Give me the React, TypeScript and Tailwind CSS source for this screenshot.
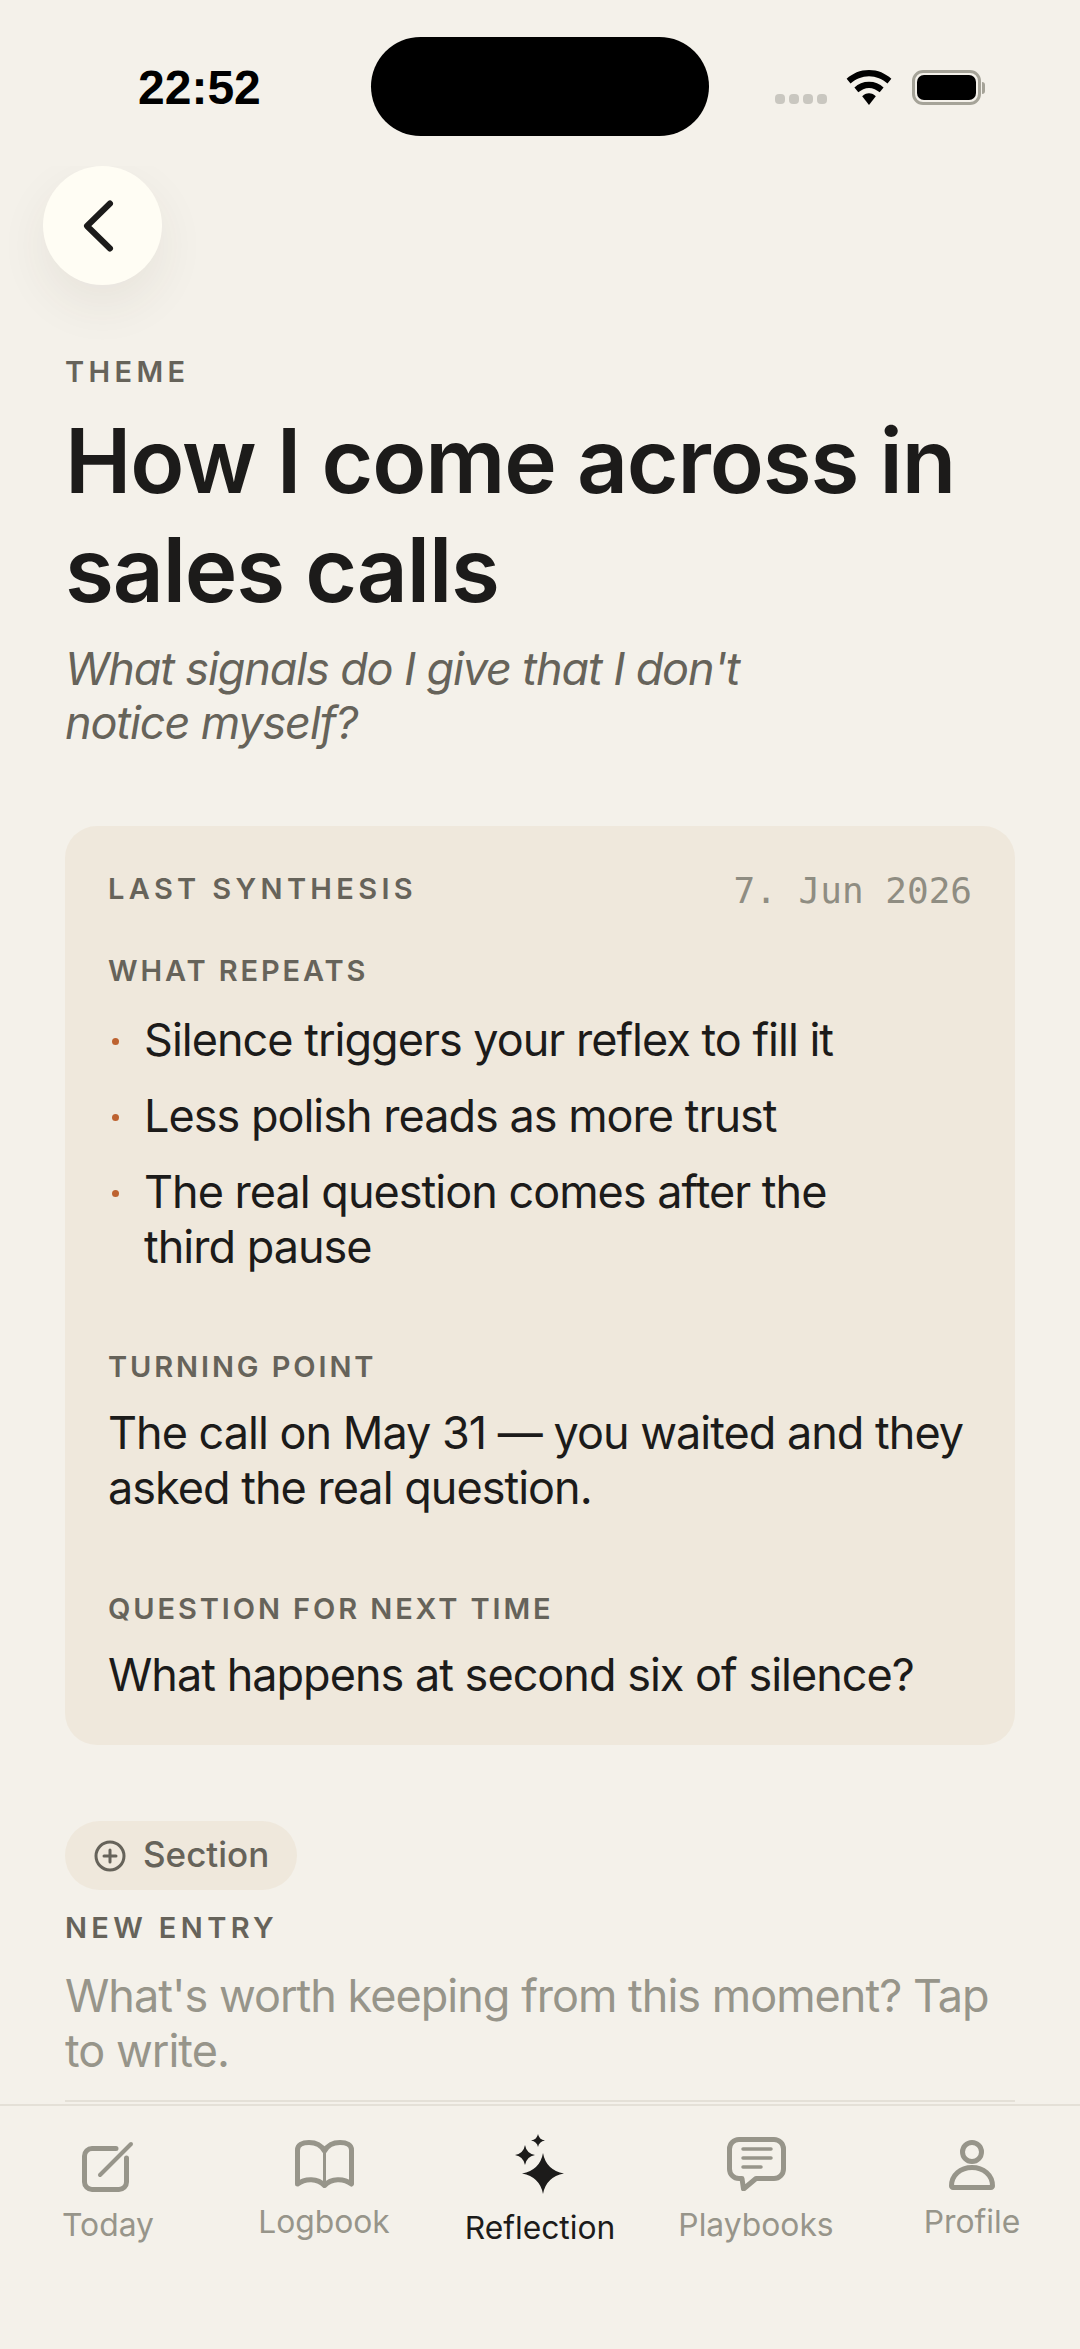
import React from "react";

const inter = "font-['Inter',sans-serif]";

const Label = ({ children, className = "" }: { children: React.ReactNode; className?: string }) => (
  <p className={`text-[29px] leading-[36px] font-semibold text-[#66635a] ${className}`}>{children}</p>
);

const TodayIcon = () => (
  <svg width="52" height="51" viewBox="0 0 52 51" fill="none" stroke="#97958a" strokeWidth="5" strokeLinecap="round" strokeLinejoin="round">
    <path d="M34 7.500H10A7.500 7.500 0 0 0 2.500 15v26a7.500 7.500 0 0 0 7.500 7.500h27a7.500 7.500 0 0 0 7.500-7.500V17" />
    <path d="M18 34 49 3" strokeWidth="4" />
  </svg>
);

const BookIcon = () => (
  <svg width="59" height="48" viewBox="0 0 59 48" fill="none" stroke="#97958a" strokeWidth="5" strokeLinejoin="round" strokeLinecap="round">
    <path d="M29.500 11C26 4.500 20 2.500 14 2.500 7 2.500 2.500 5 2.500 10v34c7.500-6 20.500-6 27 1.500C36 38 49 38 56.500 44V10c0-5-4.500-7.500-11.500-7.500-6 0-12 2-15.500 8.500Z" />
    <path d="M29.500 11v33" strokeWidth="3" />
  </svg>
);

const SparkIcon = () => (
  <svg width="50" height="60" viewBox="0 0 50 60" fill="#1c1b1a">
    <path d="M28 19Q31 36 49 39.500 31 43 28 60 25 43 7 39.500 25 36 28 19Z" />
    <path d="M10 11Q11.500 19.500 20 21 11.500 22.500 10 31 8.500 22.500 0 21 8.500 19.500 10 11Z" />
    <path d="M23 0Q24 5.500 30 6.500 24 7.500 23 13 22 7.500 16 6.500 22 5.500 23 0Z" />
  </svg>
);

const ChatIcon = () => (
  <svg width="59" height="54" viewBox="0 0 59 54" fill="none" stroke="#97958a" strokeWidth="5" strokeLinecap="round" strokeLinejoin="round">
    <path d="M12 2.500h35a9.500 9.500 0 0 1 9.500 9.500v20a9.500 9.500 0 0 1-9.500 9.500H29L16.500 52 15 41.500h-3A9.500 9.500 0 0 1 2.500 32V12A9.500 9.500 0 0 1 12 2.500Z" />
    <path d="M16 12h28M16 21h28M16 30h18" strokeWidth="3.500" />
  </svg>
);

const PersonIcon = () => (
  <svg width="46" height="50" viewBox="0 0 46 50" fill="none" stroke="#97958a" strokeWidth="5" strokeLinecap="round" strokeLinejoin="round">
    <circle cx="23" cy="12" r="9.500" />
    <path d="M2.500 46c0-11 9-18.500 20.500-18.500S43.500 35 43.500 46c0 .8-.7 1.500-1.500 1.500H4c-.8 0-1.500-.7-1.500-1.500Z" />
  </svg>
);

const tabs = [
  { name: "Today", icon: <TodayIcon />, spacing: "pt-[35px] gap-[13px]" },
  { name: "Logbook", icon: <BookIcon />, spacing: "pt-[34px] gap-[14px]" },
  { name: "Reflection", icon: <SparkIcon />, spacing: "pt-[28px] gap-[14px]", active: true },
  { name: "Playbooks", icon: <ChatIcon />, spacing: "pt-[31px] gap-[14px]" },
  { name: "Profile", icon: <PersonIcon />, spacing: "pt-[34px] gap-[12px]" },
];

const body = "text-[45px] leading-[55px] tracking-[-0.022em]";

export default function App() {
  return (
    <div className={`${inter} relative flex h-[2349px] w-[1080px] flex-col overflow-hidden bg-[#f4f1ea] text-[#1c1b1a]`}>
      {/* status bar */}
      <div className="relative h-[166px] shrink-0">
        <span className="absolute left-[138px] top-[59px] text-[48px] leading-[58px] font-bold font-['Liberation_Sans',sans-serif] text-black">
          22:52
        </span>
        <div className="absolute left-[371px] top-[37px] h-[99px] w-[338px] rounded-full bg-black" />
        <div className="absolute left-[775px] top-[94px] flex gap-[4px]">
          {[0, 1, 2, 3].map((i) => (
            <span key={i} className="h-[10px] w-[10px] rounded-[4px] bg-[#c9c7c0]" />
          ))}
        </div>
        <svg className="absolute left-[846px] top-[70px]" width="46" height="35" viewBox="0 0 46 36" fill="black">
          <path d="M23 0C14 0 6 3.500 0 9l4 5c5-4.500 12-7.500 19-7.500S37 9.500 42 14l4-5C40 3.500 32 0 23 0Z" />
          <path d="M23 12c-6 0-11 2-15 6l4 5c3-2.500 7-4.500 11-4.500s8 2 11 4.500l4-5c-4-4-9-6-15-6Z" />
          <path d="M23 24c-3 0-5 1-7 3l7 9 7-9c-2-2-4-3-7-3Z" />
        </svg>
        <div className="absolute left-[912px] top-[70px] flex items-center">
          <div className="h-[35px] w-[69px] rounded-[11px] border-[3px] border-[#a5a398] p-[2px]">
            <div className="h-full w-full rounded-[7px] bg-black" />
          </div>
          <div className="ml-[1px] h-[12px] w-[3px] rounded-r-full bg-[#a5a398]" />
        </div>
      </div>

      {/* scrolling content */}
      <div className="min-h-0 flex-1 overflow-hidden">
        <div className="ml-[43px] flex h-[119px] w-[119px] items-center justify-center rounded-full bg-[#fffdf4] shadow-[0_20px_50px_rgba(70,60,40,0.07)]">
          <svg width="44" height="56" viewBox="0 0 44 56" fill="none" stroke="#1c1b1a" strokeWidth="6" strokeLinecap="round" strokeLinejoin="round">
            <path d="M29 5.500 6 28l23 22.500" />
          </svg>
        </div>

        <div className="px-[65px]">
          <Label className="mt-[69px] tracking-[0.15em]">THEME</Label>
          <h1 className="mt-[16px] text-[89px] leading-[109px] font-semibold tracking-[-0.013em]">
            How I come across in sales calls
          </h1>
          <p className="mt-[18px] w-[760px] text-[45px] leading-[54px] italic tracking-[-0.025em] text-[#66635a]">
            What signals do I give that I don't notice myself?
          </p>

          {/* synthesis card */}
          <div className="mt-[76px] h-[919px] rounded-[32px] bg-[#efe8dc] px-[43px] pt-[45px]">
            <div className="flex items-center justify-between">
              <Label className="tracking-[0.15em]">LAST SYNTHESIS</Label>
              <span className="translate-y-[2px] text-[36px] leading-[36px] text-[#8f8d82] font-['DejaVu_Sans_Mono',monospace]">7. Jun 2026</span>
            </div>

            <Label className="mt-[46px] tracking-[0.1em]">WHAT REPEATS</Label>
            <ul className={`mt-[23px] ${body}`}>
              {[
                "Silence triggers your reflex to fill it",
                "Less polish reads as more trust",
                "The real question comes after the third pause",
              ].map((t) => (
                <li key={t} className="mb-[21px] flex">
                  <span className="mt-[26px] ml-[4px] mr-[25px] h-[7px] w-[7px] shrink-0 rounded-full bg-[#bd6230]" />
                  <span className="w-[720px]">{t}</span>
                </li>
              ))}
            </ul>

            <Label className="mt-[75px] tracking-[0.1em]">TURNING POINT</Label>
            <p className={`mt-[20px] ${body}`}>The call on May 31 — you waited and they asked the real question.</p>

            <Label className="mt-[76px] tracking-[0.1em]">QUESTION FOR NEXT TIME</Label>
            <p className={`mt-[20px] ${body}`}>What happens at second six of silence?</p>
          </div>

          {/* new entry */}
          <div className="mt-[76px] inline-flex h-[69px] items-center gap-[17px] rounded-full bg-[#efe8dc] pl-[29px] pr-[28px] text-[#66635a]">
            <svg width="32" height="32" viewBox="0 0 32 32" fill="none" stroke="#66635a" strokeWidth="3" strokeLinecap="round">
              <circle cx="16" cy="16" r="14" />
              <path d="M16 10v12M10 16h12" />
            </svg>
            <span className="-translate-y-[2px] text-[35px] leading-[42px] font-medium">Section</span>
          </div>
          <Label className="mt-[20px] tracking-[0.15em]">NEW ENTRY</Label>
          <p className={`mt-[22px] border-b-2 border-[#e4e0d7] pb-[22px] text-[#97958a] ${body}`}>
            What's worth keeping from this moment? Tap to write.
          </p>
        </div>
      </div>

      {/* tab bar */}
      <nav className="grid h-[245px] shrink-0 grid-cols-5 border-t-2 border-[#e4e0d7]">
        {tabs.map((t) => (
          <div key={t.name} className={`flex flex-col items-center ${t.spacing}`}>
            {t.icon}
            <span className={`text-[31.800px] leading-[40px] ${t.active ? "text-[#1c1b1a]" : "text-[#97958a]"}`}>{t.name}</span>
          </div>
        ))}
      </nav>
    </div>
  );
}
